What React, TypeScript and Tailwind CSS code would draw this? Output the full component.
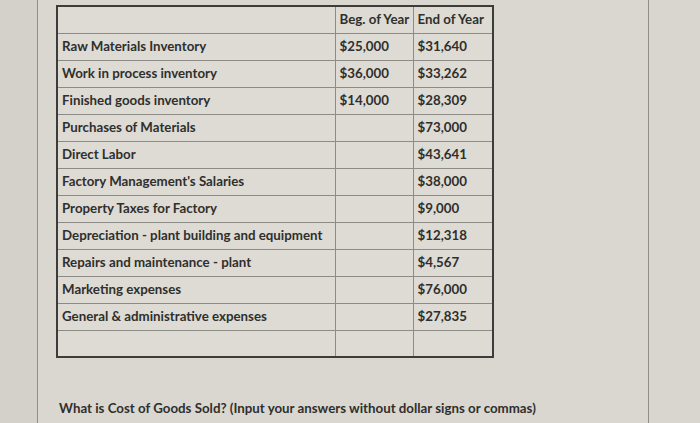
import React from "react";

type Row = { label: string; beg: string; end: string };

const rows: Row[] = [
  { label: "Raw Materials Inventory", beg: "$25,000", end: "$31,640" },
  { label: "Work in process inventory", beg: "$36,000", end: "$33,262" },
  { label: "Finished goods inventory", beg: "$14,000", end: "$28,309" },
  { label: "Purchases of Materials", beg: "", end: "$73,000" },
  { label: "Direct Labor", beg: "", end: "$43,641" },
  { label: "Factory Management's Salaries", beg: "", end: "$38,000" },
  { label: "Property Taxes for Factory", beg: "", end: "$9,000" },
  { label: "Depreciation - plant building and equipment", beg: "", end: "$12,318" },
  { label: "Repairs and maintenance - plant", beg: "", end: "$4,567" },
  { label: "Marketing expenses", beg: "", end: "$76,000" },
  { label: "General & administrative expenses", beg: "", end: "$27,835" },
  { label: "", beg: "", end: "" },
];

const cell = "h-[27px] border border-[#8c8b86] px-[4px] py-0 align-middle whitespace-nowrap";

const App = () => {
  return (
    <div
      className="flex h-[423px] w-[700px] overflow-hidden bg-[#d9d7d0] text-[13.3px] font-bold text-[#2f2f2d]"
      style={{ fontFamily: "Lato, 'Liberation Sans', sans-serif" }}
    >
      <div className="w-[38px] shrink-0 border-r border-[#8f8e89] bg-[#d3d1ca]" />
      <div className="flex w-[611px] shrink-0 flex-col border-r border-[#8f8e89] pl-[18px] pt-[5px]">
        <table className="w-[436px] table-fixed border-collapse border-2 border-[#3c3c3a] bg-[#dddbd4]">
          <colgroup>
            <col className="w-[278px]" />
            <col className="w-[78px]" />
            <col className="w-[80px]" />
          </colgroup>
          <thead>
            <tr>
              <th className={cell} />
              <th className={`${cell} text-left font-bold`}>Beg. of Year</th>
              <th className={`${cell} text-left font-bold`}>End of Year</th>
            </tr>
          </thead>
          <tbody>
            {rows.map((r, i) => (
              <tr key={i}>
                <td className={cell}>{r.label}</td>
                <td className={cell}>{r.beg}</td>
                <td className={cell}>{r.end}</td>
              </tr>
            ))}
          </tbody>
        </table>
        {/* question text */}
        <p className="mt-[41px] pl-[3px]">
          What is Cost of Goods Sold? (Input your answers without dollar signs or commas)
        </p>
      </div>
      <div className="flex-1 bg-[#d8d6cf]" />
    </div>
  );
};

export default App;
